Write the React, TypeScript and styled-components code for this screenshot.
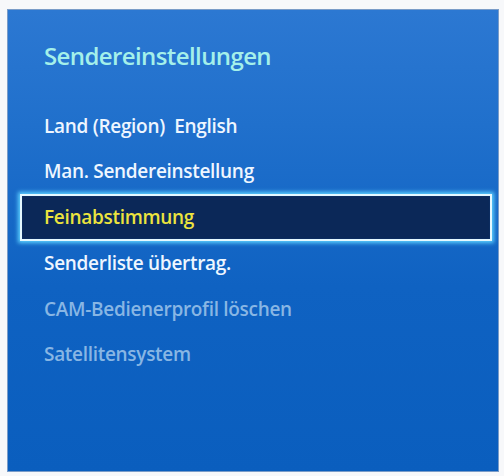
import React from 'react';
import styled, { createGlobalStyle } from 'styled-components';

const GlobalStyle = createGlobalStyle`
  html, body {
    margin: 0;
    padding: 0;
    background: #f7f8fa;
  }
  body {
    font-family: "Open Sans", "Noto Sans", sans-serif;
  }
`;

const Page = styled.div`
  width: 504px;
  height: 476px;
  padding: 9px 5px 4px 7px;
  box-sizing: border-box;
`;

const Panel = styled.div`
  width: 492px;
  height: 463px;
  box-sizing: border-box;
  border: 1px solid #7a9cc8;
  background: linear-gradient(180deg, #2c78d2 0%, #2070cc 25%, #0f62c2 60%, #0a5ebe 100%);
  display: flex;
  flex-direction: column;
`;

const Title = styled.h1`
  margin: 31px 0 32px 36px;
  font-size: 24px;
  line-height: 30px;
  font-weight: 600;
  letter-spacing: -0.6px;
  color: #a4f0ea;
`;

const Menu = styled.ul`
  list-style: none;
  margin: 0;
  padding: 0;
  display: flex;
  flex-direction: column;
`;

const Item = styled.li<{ $disabled?: boolean }>`
  height: 45.4px;
  display: flex;
  align-items: center;
  padding-left: 36px;
  font-size: 19px;
  font-weight: 600;
  letter-spacing: -0.3px;
  color: ${(p) => (p.$disabled ? '#88b6e4' : '#eef6ff')};
  white-space: pre;
`;

const ActiveItem = styled.li`
  height: 47px;
  margin: 0 6px 0 12px;
  display: flex;
  align-items: center;
  padding-left: 22px;
  box-sizing: border-box;
  font-size: 19px;
  font-weight: 600;
  letter-spacing: -0.3px;
  color: #ece43e;
  background: #0b2858;
  border: 2px solid #e4f8ff;
  box-shadow: 0 0 4px 2px #5cd0ff, inset 0 0 2px #103a78;
`;

export default function App() {
  return (
    <Page>
      <GlobalStyle />
      <Panel>
        <Title>Sendereinstellungen</Title>
        <Menu>
          <Item>Land (Region)  English</Item>
          <Item>Man. Sendereinstellung</Item>
          <ActiveItem>Feinabstimmung</ActiveItem>
          <Item>Senderliste übertrag.</Item>
          <Item $disabled>CAM-Bedienerprofil löschen</Item>
          <Item $disabled>Satellitensystem</Item>
        </Menu>
      </Panel>
    </Page>
  );
}
